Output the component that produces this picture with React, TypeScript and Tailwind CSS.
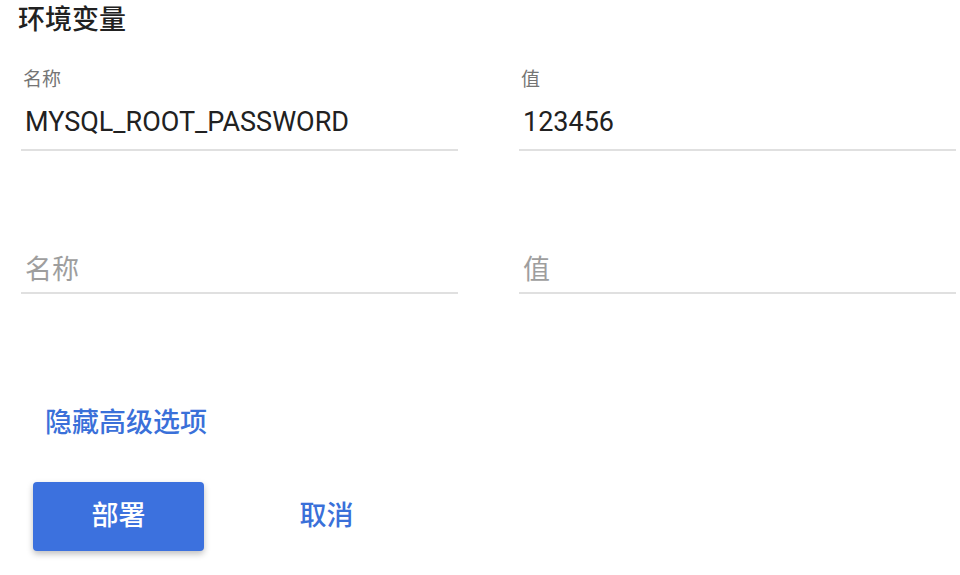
import React from "react";

const font = { fontFamily: '"Roboto", "Noto Sans CJK SC", sans-serif' };

function Field({ label, value, placeholder }: { label?: string; value?: string; placeholder: string }) {
  return (
    <div className="w-[437px]">
      <div className="h-[34px] pl-[2px] text-[19px] leading-[19px] text-[#757575]">{label}</div>
      <div className="border-b-2 border-[#e0e0e0] pb-[9px] pl-[4px]">
        {value ? (
          <div className="h-[36px] text-[27px] leading-[36px] text-[#212121]">{value}</div>
        ) : (
          <div className="h-[36px] pt-[5px] text-[27px] leading-[36px] text-[#9e9e9e]">{placeholder}</div>
        )}
      </div>
    </div>
  );
}

export default function App() {
  return (
    <div className="h-[575px] w-[960px] overflow-hidden bg-white" style={font}>
      <h2 className="pl-[18px] pt-[7px] text-[27px] font-medium leading-[27px] text-[#212121]">环境变量</h2>
      <div className="mt-[36px] flex flex-col gap-[62px] pl-[21px]">
        <div className="flex gap-[61px]">
          <Field label="名称" value="MYSQL_ROOT_PASSWORD" placeholder="名称" />
          <Field label="值" value="123456" placeholder="值" />
        </div>
        <div className="flex gap-[61px]">
          <Field placeholder="名称" />
          <Field placeholder="值" />
        </div>
      </div>
      <div className="mt-[111px] pl-[33px]">
        <button className="px-[12px] text-[27px] font-medium leading-[36px] text-[#3a70d9]">隐藏高级选项</button>
      </div>
      <div className="mt-[41px] flex gap-[37px] pl-[33px]">
        <button className="h-[69px] w-[171px] rounded-[4px] bg-[#3c71de] text-[27px] font-medium text-white shadow-[0_3px_6px_rgba(0,0,0,0.25)]">
          部署
        </button>
        <button className="h-[69px] w-[171px] text-[27px] font-medium text-[#3a70d9]">取消</button>
      </div>
    </div>
  );
}
